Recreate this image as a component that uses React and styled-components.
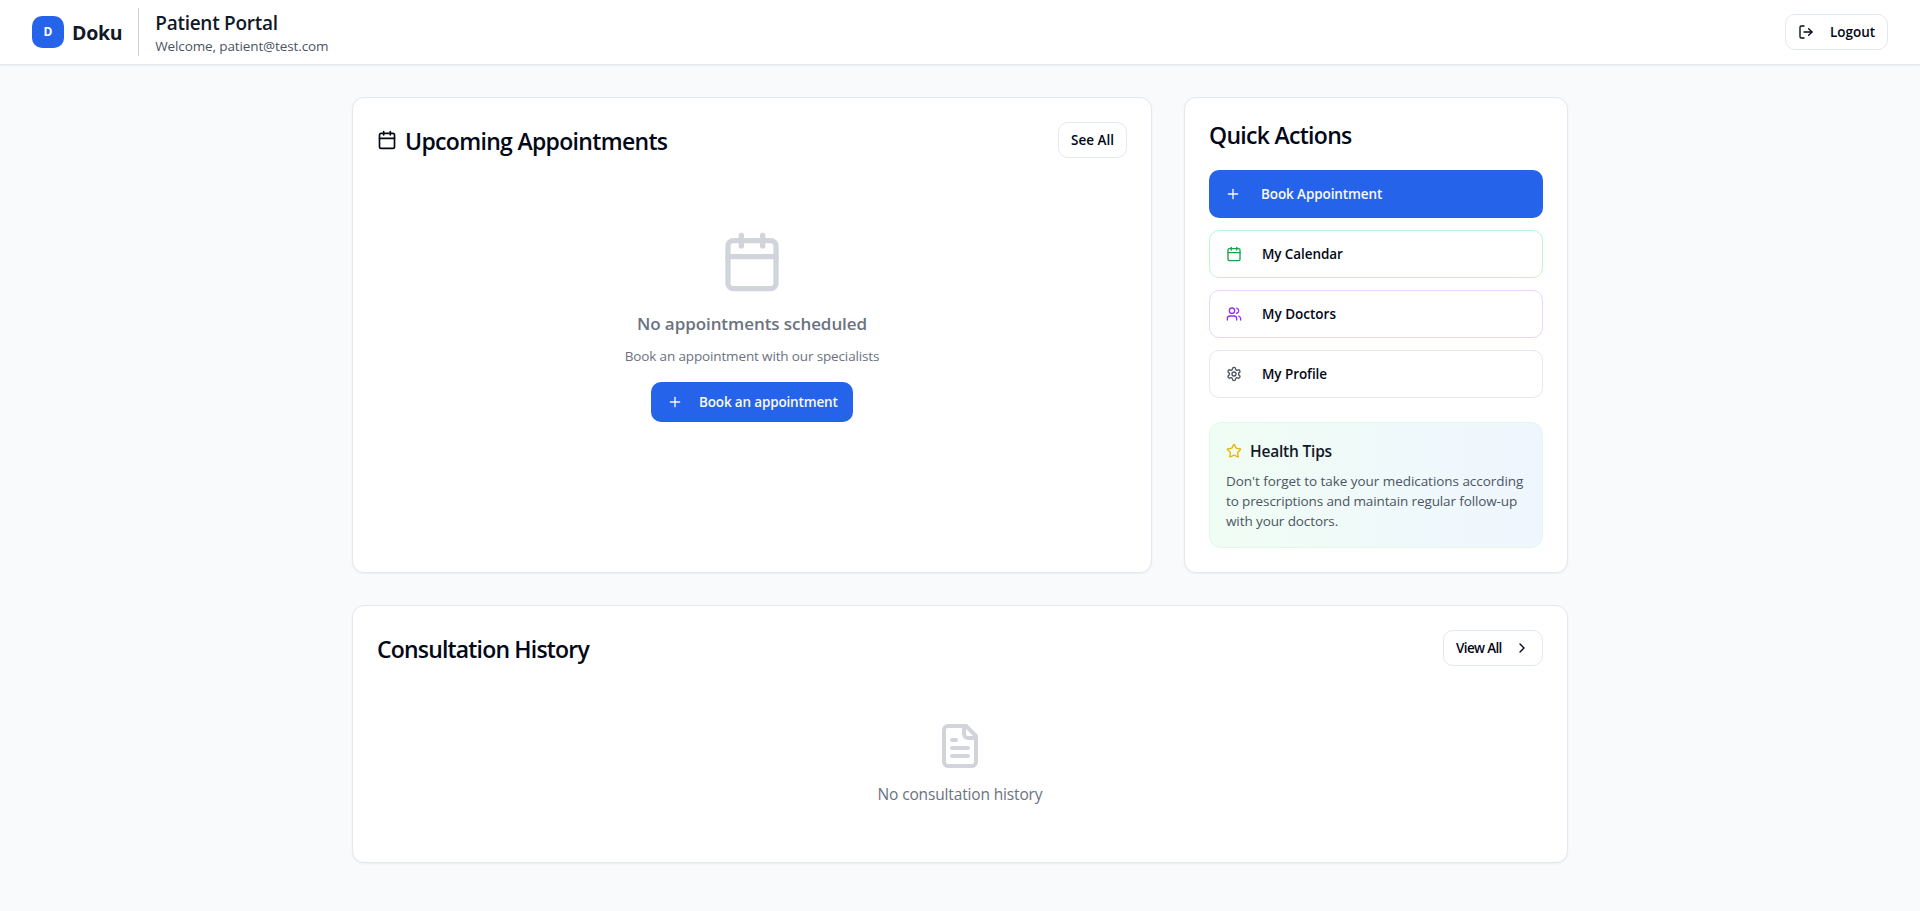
import React from "react";
import styled, { createGlobalStyle } from "styled-components";
import { Calendar, ChevronRight, LogOut, Plus, Star } from "lucide-react";

const GlobalStyle = createGlobalStyle`
  *, *::before, *::after { box-sizing: border-box; }
  body {
    margin: 0;
    min-height: 100vh;
    background: #f8fafc;
    color: #020817;
    font-family: "Open Sans", "Noto Sans", sans-serif;
    font-size: 16px;
    line-height: 24px;
  }
  h1, h2, h3, p { margin: 0; }
  svg { display: block; flex-shrink: 0; }
`;

/* One line of text; size, weight and tracking vary with the place. */
const Label = styled.span`
  display: block;
  white-space: nowrap;
  font-size: ${(p) => p.$size}px;
  line-height: ${(p) => p.$line}px;
  font-weight: ${(p) => p.$weight || 400};
  letter-spacing: ${(p) => p.$track || 0}px;
  color: ${(p) => p.$color || "inherit"};
  padding-top: ${(p) => p.$drop || 0}px;
  margin-bottom: ${(p) => -(p.$drop || 0)}px;
`;

const TopBar = styled.header`
  display: flex;
  align-items: center;
  justify-content: space-between;
  height: 65px;
  padding: 0 32px;
  background: #fff;
  border-bottom: 1px solid #e2e8f0;
  box-shadow: 0 1px 2px rgba(0, 0, 0, 0.05);
`;

const Brand = styled.div`
  display: flex;
  align-items: center;
`;

const LogoMark = styled.div`
  display: flex;
  align-items: center;
  justify-content: center;
  width: 32px;
  height: 32px;
  margin-right: 8px;
  border-radius: 10px;
  background: #2563eb;
  color: #fff;
`;

const PortalInfo = styled.div`
  height: 48px;
  margin-left: 16px;
  padding-left: 16px;
  border-left: 1px solid #d1d5db;
`;

const Main = styled.main`
  display: grid;
  grid-template-columns: repeat(3, 1fr);
  gap: 32px;
  max-width: 1280px;
  margin: 0 auto;
  padding: 32px;
`;

const Card = styled.section`
  grid-column: span ${(p) => p.$span};
  height: ${(p) => p.$height}px;
  padding: 24px;
  background: #fff;
  border: 1px solid #e2e8f0;
  border-radius: 12px;
  box-shadow: 0 1px 2px rgba(0, 0, 0, 0.05);
`;

const CardHeader = styled.div`
  display: flex;
  align-items: center;
  justify-content: space-between;
`;

const TitleRow = styled.div`
  display: flex;
  align-items: center;
  gap: 8px;
`;

const Button = styled.button`
  display: flex;
  align-items: center;
  gap: ${(p) => p.$gap || 0}px;
  width: ${(p) => p.$width}px;
  height: 36px;
  padding: 0 12px;
  background: #fff;
  color: #020817;
  border: 1px solid #e2e8f0;
  border-radius: 10px;
  font-family: inherit;
`;

const PrimaryButton = styled(Button)`
  height: 40px;
  padding: 0 16px;
  border: 0;
  background: #2563eb;
  color: #f8fafc;
`;

const Empty = styled.div`
  display: flex;
  flex-direction: column;
  align-items: center;
  padding-top: ${(p) => p.$top}px;
  color: #d1d5db;
`;

const Gap = styled.div`
  height: ${(p) => p.$h}px;
`;

const ActionList = styled.div`
  display: flex;
  flex-direction: column;
  gap: 12px;
  margin-top: 24px;
`;

const Action = styled.button`
  display: flex;
  align-items: center;
  gap: 20px;
  height: 48px;
  padding: 0 16px;
  background: ${(p) => (p.$primary ? "#2563eb" : "#fff")};
  color: ${(p) => (p.$primary ? "#f8fafc" : "#020817")};
  border: ${(p) => (p.$primary ? "0" : `1px solid ${p.$border}`)};
  border-radius: 10px;
  font-family: inherit;
`;

const Tips = styled.div`
  height: 126px;
  margin-top: 24px;
  padding: 16px;
  border: 1px solid #dcfce7;
  border-radius: 12px;
  background: linear-gradient(to right, #f0fdf4, #eff6ff);
`;

function Outline({ size, color, children }) {
  return (
    <svg width={size} height={size} viewBox="0 0 24 24" fill="none" stroke={color}
      strokeWidth="2" strokeLinecap="round" strokeLinejoin="round">
      {children}
    </svg>
  );
}

const UsersIcon = (props) => (
  <Outline {...props}>
    <path d="M16 21v-2a4 4 0 0 0-4-4H6a4 4 0 0 0-4 4v2" />
    <circle cx="9" cy="7" r="4" />
    <path d="M22 21v-2a4 4 0 0 0-3-3.87" />
    <path d="M16 3.13a4 4 0 0 1 0 7.75" />
  </Outline>
);

const GearIcon = (props) => (
  <Outline {...props}>
    <path d="M12.22 2h-.44a2 2 0 0 0-2 2v.18a2 2 0 0 1-1 1.73l-.43.25a2 2 0 0 1-2 0l-.15-.08a2 2 0 0 0-2.73.73l-.22.38a2 2 0 0 0 .73 2.73l.15.1a2 2 0 0 1 1 1.72v.51a2 2 0 0 1-1 1.74l-.15.09a2 2 0 0 0-.73 2.73l.22.38a2 2 0 0 0 2.73.73l.15-.08a2 2 0 0 1 2 0l.43.25a2 2 0 0 1 1 1.73V20a2 2 0 0 0 2 2h.44a2 2 0 0 0 2-2v-.18a2 2 0 0 1 1-1.73l.43-.25a2 2 0 0 1 2 0l.15.08a2 2 0 0 0 2.73-.73l.22-.39a2 2 0 0 0-.73-2.73l-.15-.08a2 2 0 0 1-1-1.74v-.5a2 2 0 0 1 1-1.74l.15-.09a2 2 0 0 0 .73-2.73l-.22-.38a2 2 0 0 0-2.73-.73l-.15.08a2 2 0 0 1-2 0l-.43-.25a2 2 0 0 1-1-1.73V4a2 2 0 0 0-2-2z" />
    <circle cx="12" cy="12" r="3" />
  </Outline>
);

const DocumentIcon = (props) => (
  <Outline {...props}>
    <path d="M15 2H6a2 2 0 0 0-2 2v16a2 2 0 0 0 2 2h12a2 2 0 0 0 2-2V7Z" />
    <path d="M14 2v4a2 2 0 0 0 2 2h4" />
    <path d="M10 9H8" />
    <path d="M16 13H8" />
    <path d="M16 17H8" />
  </Outline>
);

export default function App() {
  return (
    <>
      <GlobalStyle />
      <TopBar>
        <Brand>
          <LogoMark><Label $size={12} $line={16} $weight={700}>D</Label></LogoMark>
          <Label $size={19.5} $line={28} $weight={700} $track={-0.3} $drop={1} $color="#111827">Doku</Label>
          <PortalInfo>
            <Label as="h1" $size={19} $line={28} $weight={600} $track={-0.27} $drop={1} $color="#111827">Patient Portal</Label>
            <Label as="p" $size={13.5} $line={20} $track={-0.12} $color="#4b5563">Welcome, patient@test.com</Label>
          </PortalInfo>
        </Brand>
        <Button $width={103} $gap={16}>
          <LogOut size={16} />
          <Label $size={13.5} $line={20} $weight={600}>Logout</Label>
        </Button>
      </TopBar>

      <Main>
        <Card $span={2} $height={476}>
          <CardHeader>
            <TitleRow>
              <Calendar size={20} />
              <Label as="h2" $size={23} $line={36} $weight={600} $track={-0.68} $drop={1}>Upcoming Appointments</Label>
            </TitleRow>
            <Button $width={69}><Label $size={13.5} $line={20} $weight={600}>See All</Label></Button>
          </CardHeader>
          <Empty $top={72}>
            <Calendar size={64} />
            <Gap $h={16} />
            <Label as="h3" $size={17} $line={28} $weight={600} $track={-0.07} $color="#6b7280">No appointments scheduled</Label>
            <Gap $h={8} />
            <Label as="p" $size={13.5} $line={20} $track={-0.14} $color="#6b7280">Book an appointment with our specialists</Label>
            <Gap $h={16} />
            <PrimaryButton $width={202} $gap={16}>
              <Plus size={16} />
              <Label $size={13.5} $line={20} $weight={600} $track={-0.16}>Book an appointment</Label>
            </PrimaryButton>
          </Empty>
        </Card>

        <Card $span={1} $height={476}>
          <Label as="h2" $size={23} $line={24} $weight={600} $track={-0.7} $drop={1}>Quick Actions</Label>
          <ActionList>
            <Action $primary>
              <Plus size={16} />
              <Label $size={13.5} $line={20} $weight={600} $track={-0.1}>Book Appointment</Label>
            </Action>
            <Action $border="#bbf7d0">
              <Calendar size={16} color="#16a34a" />
              <Label $size={13.5} $line={20} $weight={600} $track={-0.1}>My Calendar</Label>
            </Action>
            <Action $border="#e9d5ff">
              <UsersIcon size={16} color="#9333ea" />
              <Label $size={13.5} $line={20} $weight={600}>My Doctors</Label>
            </Action>
            <Action $border="#e5e7eb">
              <GearIcon size={16} color="#4b5563" />
              <Label $size={13.5} $line={20} $weight={600} $track={-0.07}>My Profile</Label>
            </Action>
          </ActionList>
          <Tips>
            <TitleRow>
              <Star size={16} color="#eab308" />
              <Label as="h3" $size={15.5} $line={24} $weight={600} $track={-0.2} $color="#111827">Health Tips</Label>
            </TitleRow>
            <Gap $h={8} />
            <p>
              <Label $size={13.5} $line={20} $track={-0.05} $color="#4b5563">Don't forget to take your medications according</Label>
              <Label $size={13.5} $line={20} $track={-0.12} $color="#4b5563">to prescriptions and maintain regular follow-up</Label>
              <Label $size={13.5} $line={20} $track={-0.1} $color="#4b5563">with your doctors.</Label>
            </p>
          </Tips>
        </Card>

        <Card $span={3} $height={258}>
          <CardHeader>
            <Label as="h2" $size={23} $line={36} $weight={600} $track={-0.82} $drop={1}>Consultation History</Label>
            <Button $width={100} $gap={12}>
              <Label $size={13.5} $line={20} $weight={600} $track={-0.65}>View All</Label>
              <ChevronRight size={16} />
            </Button>
          </CardHeader>
          <Empty $top={56}>
            <DocumentIcon size={48} color="#d1d5db" />
            <Gap $h={12} />
            <Label as="p" $size={15.5} $line={24} $track={-0.15} $color="#6b7280">No consultation history</Label>
          </Empty>
        </Card>
      </Main>
    </>
  );
}
